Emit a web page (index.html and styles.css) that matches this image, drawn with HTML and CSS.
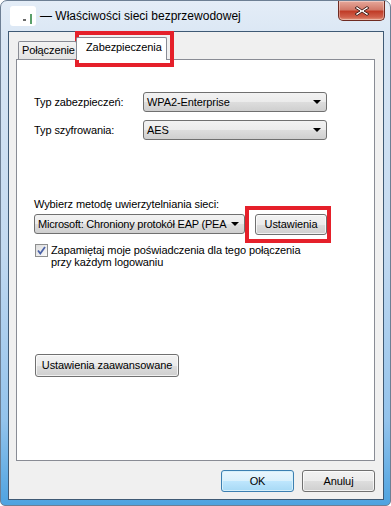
FILE: index.html
```html
<!DOCTYPE html>
<html lang="pl">
<head>
    <meta charset="UTF-8">
    <title>Właściwości sieci bezprzewodowej</title>
    <link rel="stylesheet" href="styles.css">
</head>
<body>
    <!-- okno dialogowe -->
    <div class="window">
        <div class="titlebar">
            <div class="app-icon">
                <span class="blot"></span>
                <span class="bar"></span>
            </div>
            <div class="title">— Właściwości sieci bezprzewodowej</div>
            <div class="close-btn">
                <svg width="18" height="12" viewBox="0 0 18 12">
                    <path d="M4 1.5 L9 5 L14 1.5 L16 3 L11 6 L16 9 L14 10.5 L9 7 L4 10.5 L2 9 L7 6 L2 3 Z" fill="#fff" stroke="#4a2520" stroke-width="1" stroke-linejoin="round"/>
                </svg>
            </div>
        </div>

        <div class="client">
            <!-- zakładki -->
            <div class="tabs">
                <div class="tab">Połączenie</div>
                <div class="tab active">Zabezpieczenia</div>
            </div>

            <div class="panel">
                <div class="form-grid">
                    <label>Typ zabezpieczeń:</label>
                    <div class="combo">WPA2-Enterprise<span class="arrow"></span></div>
                    <label>Typ szyfrowania:</label>
                    <div class="combo">AES<span class="arrow"></span></div>
                </div>

                <div class="method-label">Wybierz metodę uwierzytelniania sieci:</div>
                <div class="method-row">
                    <div class="combo wide"><span class="combo-text">Microsoft: Chroniony protokół EAP (PEA</span><span class="arrow"></span></div>
                    <div class="btn">Ustawienia</div>
                </div>

                <div class="check-row">
                    <div class="checkbox">
                        <svg width="9" height="9" viewBox="0 0 9 9">
                            <path d="M1 4.5 L3.3 7.5 L8 1" fill="none" stroke="#4b62a8" stroke-width="1.8"/>
                        </svg>
                    </div>
                    <div class="check-text">Zapamiętaj moje poświadczenia dla tego połączenia<br>przy każdym logowaniu</div>
                </div>

                <div class="btn advanced">Ustawienia zaawansowane</div>
            </div>

            <div class="footer">
                <div class="btn default">OK</div>
                <div class="btn">Anuluj</div>
            </div>
        </div>

        <!-- czerwone ramki zaznaczenia -->
        <div class="mark mark-tab"></div>
        <div class="mark mark-btn"></div>
    </div>
</body>
</html>
```

FILE: styles.css
```css
* {
    margin: 0;
    padding: 0;
    box-sizing: border-box;
}

body {
    background-color: #fff;
    font-family: "Liberation Sans", Arial, sans-serif;
    font-size: 11px;
    letter-spacing: -0.1px;
    color: #000;
}

.window {
    position: relative;
    width: 391px;
    height: 506px;
    border: 1px solid #6d7f94;
    border-radius: 7px 7px 5px 5px;
    background: linear-gradient(to bottom, #e4edf7 0, #d9e6f4 40px, #c2d9f0 250px, #93c3ec 420px, #4ea3e0 100%);
    padding: 0 6px 5px 7px;
    display: flex;
    flex-direction: column;
}

.titlebar {
    height: 31px;
    display: flex;
    align-items: center;
    position: relative;
}

.app-icon {
    width: 26px;
    height: 20px;
    margin-left: 2px;
    background-color: #fff;
    border-radius: 3px;
    position: relative;
}

.app-icon .blot {
    position: absolute;
    left: 13px;
    top: 13px;
    width: 3px;
    height: 2px;
    background-color: #6b6b6b;
}

.app-icon .bar {
    position: absolute;
    left: 20px;
    top: 8px;
    width: 2px;
    height: 10px;
    background-color: #5aa06a;
}

.title {
    margin-left: 4px;
    font-size: 12px;
    letter-spacing: 0;
}

.close-btn {
    position: absolute;
    right: -1px;
    top: 0;
    width: 47px;
    height: 20px;
    border: 1px solid #6e2b22;
    border-top: none;
    border-radius: 0 0 5px 5px;
    background: linear-gradient(to bottom, #e6a89b 0, #d27a6a 45%, #c13d28 55%, #d0614c 85%, #e49a80 100%);
    display: flex;
    align-items: center;
    justify-content: center;
    box-shadow: inset 0 0 0 1px rgba(255, 255, 255, 0.35);
}

.client {
    flex: 1;
    border: 1px solid #3f5a75;
    background-color: #f0f0f0;
    padding: 5px 8px 7px 7px;
    display: flex;
    flex-direction: column;
}

.tabs {
    display: flex;
    align-items: flex-end;
    height: 22px;
    padding-left: 2px;
    position: relative;
    z-index: 1;
}

.tab {
    height: 18px;
    width: 59px;
    padding-left: 3px;
    border: 1px solid #898c95;
    border-bottom: none;
    border-radius: 2px 2px 0 0;
    background: linear-gradient(to bottom, #f3f3f3, #e3e3e3);
    line-height: 17px;
    white-space: nowrap;
    overflow: hidden;
}

.tab.active {
    width: 91px;
    height: 23px;
    margin-bottom: -1px;
    margin-left: -1px;
    padding-left: 9px;
    background: #fff;
    line-height: 19px;
}

.panel {
    height: 402px;
    border: 1px solid #898c95;
    background-color: #fff;
    padding: 0 0 0 17px;
}

.form-grid {
    display: grid;
    grid-template-columns: 109px 184px;
    row-gap: 8px;
    align-items: center;
    margin-top: 32px;
}

.combo {
    position: relative;
    height: 20px;
    border: 1px solid #707070;
    border-radius: 3px;
    background: linear-gradient(to bottom, #f2f2f2 0, #ebebeb 50%, #dddddd 51%, #cfcfcf 100%);
    padding-left: 3px;
    line-height: 18px;
    white-space: nowrap;
}

.combo .arrow {
    position: absolute;
    right: 5px;
    top: 7px;
    border-left: 4px solid transparent;
    border-right: 4px solid transparent;
    border-top: 4px solid #000;
}

.method-label {
    margin-top: 58px;
    line-height: 13px;
}

.method-row {
    display: flex;
    gap: 10px;
    margin-top: 3px;
}

.combo.wide {
    width: 211px;
}

.combo-text {
    letter-spacing: -0.22px;
}

.btn {
    height: 21px;
    border: 1px solid #707070;
    border-radius: 3px;
    background: linear-gradient(to bottom, #f2f2f2 0, #ebebeb 50%, #dddddd 51%, #cfcfcf 100%);
    box-shadow: inset 0 0 0 1px rgba(255, 255, 255, 0.7);
    line-height: 19px;
    text-align: center;
    white-space: nowrap;
}

.method-row .btn {
    width: 72px;
}

.check-row {
    display: flex;
    margin-top: 9px;
    padding-left: 1px;
}

.checkbox {
    width: 13px;
    height: 13px;
    border: 1px solid #8e8f8f;
    background: linear-gradient(135deg, #dcdcdc, #fbfbfb);
    display: flex;
    align-items: center;
    justify-content: center;
}

.check-text {
    margin-left: 3px;
    line-height: 12px;
}

.btn.advanced {
    width: 144px;
    height: 23px;
    margin-top: 86px;
    margin-left: 1px;
    line-height: 21px;
}

.footer {
    display: flex;
    justify-content: flex-end;
    gap: 8px;
    margin-top: 9px;
}

.footer .btn {
    width: 73px;
    height: 22px;
    line-height: 20px;
}

.btn.default {
    border-color: #3c7fb1;
    background: linear-gradient(to bottom, #eaf6fd 0, #d9f0fc 50%, #bee6fd 51%, #a7d9f5 100%);
    box-shadow: inset 0 0 0 1px #d6f0fb;
}

.mark {
    position: absolute;
    border: 4px solid #e5202a;
}

.mark-tab {
    left: 74px;
    top: 30px;
    width: 99px;
    height: 36px;
}

.mark-btn {
    left: 244px;
    top: 205px;
    width: 86px;
    height: 37px;
}
```
